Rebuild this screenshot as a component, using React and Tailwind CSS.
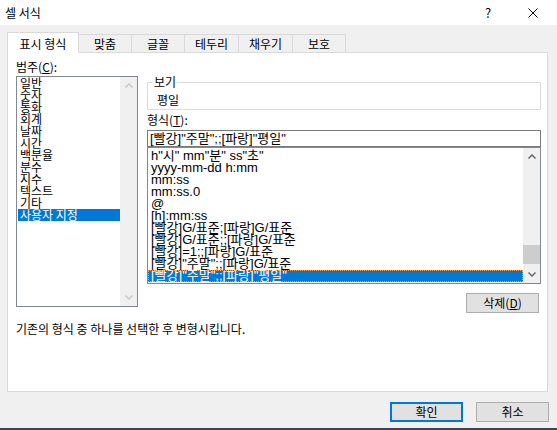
const FONT = { fontFamily: '"Noto Sans CJK KR", "Noto Sans", sans-serif' };
const LIST_FONT = { fontFamily: '"Liberation Sans", "Noto Sans CJK KR", sans-serif' };

function Chevron({ down = false, color = '#606060' }) {
  return (
    <svg width="8" height="5" viewBox="0 0 8 5" className="block">
      <path
        d={down ? 'M0.5 0.5 L4 4 L7.5 0.5' : 'M0.5 4.5 L4 1 L7.5 4.5'}
        fill="none"
        stroke={color}
        strokeWidth="1.4"
      />
    </svg>
  );
}

export default function App() {
  const cats = ['일반', '숫자', '통화', '회계', '날짜', '시간', '백분율', '분수', '지수', '텍스트', '기타', '사용자 지정'];
  const fmts = [
    'h"시" mm"분" ss"초"',
    'yyyy-mm-dd h:mm',
    'mm:ss',
    'mm:ss.0',
    '@',
    '[h]:mm:ss',
    '[빨강]G/표준;[파랑]G/표준',
    '[빨강]G/표준;;[파랑]G/표준',
    '[빨강]=1;;[파랑]G/표준',
    '[빨강]"주말";;[파랑]G/표준',
    '[빨강]"주말";;[파랑]"평일"',
  ];
  const tabs = [
    ['맞춤', 'w-[53px]'],
    ['글꼴', 'w-[53px]'],
    ['테두리', 'w-[54px]'],
    ['채우기', 'w-[54px]'],
    ['보호', 'w-[53px]'],
  ];

  return (
    <div className="w-[557px] h-[430px] bg-[#f0f0f0] flex flex-col overflow-hidden text-black text-[12px] leading-[12px]" style={FONT}>
      {/* Title bar */}
      <div className="h-[25px] bg-white flex items-center shrink-0">
        <span className="pl-[5px] text-[12px] leading-[14px]">셀 서식</span>
        <span className="ml-auto text-[13px] leading-[14px] w-[8px] text-center">?</span>
        <div className="ml-[36px] mr-[19px]">
          <svg width="10" height="10" viewBox="0 0 10 10" className="block">
            <path d="M0.5 0.5 L9.5 9.5 M9.5 0.5 L0.5 9.5" stroke="#000" strokeWidth="1" fill="none" />
          </svg>
        </div>
      </div>

      {/* Tabs */}
      <div className="flex items-end pt-[7px] pl-[7px] h-[27px] shrink-0">
        <div className="relative z-10 -mb-[1px] w-[72px] h-[21px] bg-white border-t border-l border-r border-[#d9d9d9] flex items-center justify-center pt-[1px]">
          표시 형식
        </div>
        {tabs.map(([t, w]) => (
          <div key={t} className={`${w} h-[18px] border-t border-r border-[#d9d9d9] bg-[#f0f0f0] flex items-center justify-center pt-[1px]`}>
            {t}
          </div>
        ))}
      </div>

      {/* Panel */}
      <div className="ml-[7px] w-[541px] h-[340px] bg-white border border-[#d9d9d9] flex flex-col pl-[8px] pt-[8px] shrink-0">
        <div className="flex">
          {/* Left column */}
          <div className="w-[122px] flex flex-col">
            <div className="h-[12px]">범주(<span className="underline">C</span>):</div>
            <div className="mt-[3px] h-[231px] border border-[#828790] flex">
              <div className="flex-1 flex flex-col">
                {cats.map((c, i) =>
                  i === cats.length - 1 ? (
                    <div key={c} className="relative ml-[1px] h-[12px] bg-[#0078d7] text-white pl-[2px] whitespace-nowrap">{c}</div>
                  ) : (
                    <div key={c} className="h-[12px] pl-[3px] whitespace-nowrap">{c}</div>
                  )
                )}
              </div>
              <div className="w-[17px] bg-[#f0f0f0] flex flex-col">
                <div className="h-[17px] flex items-center justify-center"><Chevron color="#c5c5c5" /></div>
                <div className="flex-1" />
                <div className="h-[17px] flex items-center justify-center"><Chevron down color="#c5c5c5" /></div>
              </div>
            </div>
          </div>

          {/* Right column */}
          <div className="ml-[9px] mt-[15px] w-[394px] flex flex-col">
            <fieldset className="border border-[#dcdcdc] pl-[9px] pt-[6px] pb-[3px] h-[34px]">
              <legend className="-ml-[4px] px-[1px] leading-[12px]">보기</legend>
              <div className="h-[12px]">평일</div>
            </fieldset>
            <div className="mt-[4px] h-[12px]">형식(<span className="underline">T</span>):</div>
            <div className="mt-[4px] h-[17px] border border-[#7a7a7a] flex items-center pl-[2px] text-[13px] whitespace-nowrap" style={LIST_FONT}>
              [빨강]"주말";;[파랑]"평일"
            </div>
            <div className="h-[137px] border border-[#828790] flex overflow-hidden">
              <div className="flex-1 flex flex-col pt-[2px] overflow-hidden text-[13px]" style={LIST_FONT}>
                {fmts.map((f, i) =>
                  i === fmts.length - 1 ? (
                    <div key={f} className="relative h-[12px] bg-[#0078d7] text-white pl-[2px] border border-dotted border-[#ff9d3c] whitespace-nowrap leading-[10px]">{f}</div>
                  ) : (
                    <div key={f} className="h-[12px] pl-[3px] whitespace-nowrap">{f}</div>
                  )
                )}
              </div>
              <div className="w-[17px] bg-[#f0f0f0] flex flex-col">
                <div className="h-[17px] flex items-center justify-center"><Chevron /></div>
                <div className="h-[80px]" />
                <div className="h-[19px] bg-[#cdcdcd]" />
                <div className="flex-1" />
                <div className="h-[17px] flex items-center justify-center"><Chevron down /></div>
              </div>
            </div>
            <div className="flex justify-end mt-[9px] pr-[2px]">
              <div className="w-[73px] h-[20px] bg-[#e1e1e1] border border-[#adadad] flex items-center justify-center">
                삭제(<span className="underline">D</span>)
              </div>
            </div>
          </div>
        </div>
        <div className="mt-[9px] h-[14px] leading-[14px]">기존의 형식 중 하나를 선택한 후 변형시킵니다.</div>
      </div>

      {/* Buttons */}
      <div className="flex justify-end gap-[13px] pt-[10px] pr-[8px]">
        <div className="w-[73px] h-[20px] bg-[#e1e1e1] border-2 border-[#0078d7] flex items-center justify-center">확인</div>
        <div className="w-[73px] h-[20px] bg-[#e1e1e1] border border-[#adadad] flex items-center justify-center">취소</div>
      </div>

      <div className="mt-auto h-[2px] bg-[#3b4652] shrink-0" />
    </div>
  );
}
